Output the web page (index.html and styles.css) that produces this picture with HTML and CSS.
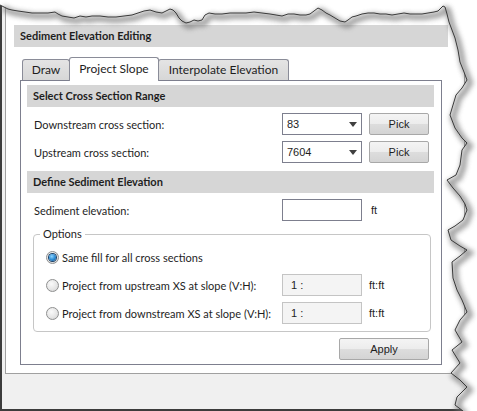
FILE: index.html
```html
<!DOCTYPE html>
<html>
<head>
<meta charset="utf-8">
<link rel="stylesheet" href="styles.css">
</head>
<body>
<div class="shot">
  <div class="window">
    <div class="panel">
      <div class="title">Sediment Elevation Editing</div>
      <div class="tabs">
        <div class="tab tab-draw">Draw</div>
        <div class="tab tab-slope active">Project Slope</div>
        <div class="tab tab-interp">Interpolate Elevation</div>
      </div>
      <div class="tabpage">
        <div class="section">Select Cross Section Range</div>
        <div class="row">
          <span class="label">Downstream cross section:</span>
          <div class="combo"><span class="value">83</span><span class="arrow"></span></div>
          <div class="btn pick">Pick</div>
        </div>
        <div class="row">
          <span class="label">Upstream cross section:</span>
          <div class="combo"><span class="value">7604</span><span class="arrow"></span></div>
          <div class="btn pick">Pick</div>
        </div>
        <div class="section section-second">Define Sediment Elevation</div>
        <div class="row">
          <span class="label">Sediment elevation:</span>
          <div class="field"></div>
          <span class="unit">ft</span>
        </div>
        <fieldset class="options">
          <legend>Options</legend>
          <div class="opt">
            <span class="radio checked"></span><span class="opt-text">Same fill for all cross sections</span>
          </div>
          <div class="opt">
            <span class="radio"></span><span class="opt-text">Project from upstream XS at slope (V:H):</span>
            <div class="field disabled">1 :</div><span class="unit unit-ratio">ft:ft</span>
          </div>
          <div class="opt">
            <span class="radio"></span><span class="opt-text">Project from downstream XS at slope (V:H):</span>
            <div class="field disabled">1 :</div><span class="unit unit-ratio">ft:ft</span>
          </div>
        </fieldset>
        <div class="actions"><div class="btn apply">Apply</div></div>
      </div>
    </div>
  </div>
  <svg class="tear" width="477" height="411" viewBox="0 0 477 411">
    <defs><filter id="blur" x="-10%" y="-10%" width="120%" height="120%"><feGaussianBlur stdDeviation="2.6"/></filter></defs>
    <polyline class="tear-shadow" transform="translate(3,3)" points="0,5 4,7 8,9 12,10 18,11 25,12 32,13 40,13 48,13 55,12 58,14 62,16 68,17 74,18 80,16 86,17 92,16 100,16 108,17 116,17 124,16 132,15 138,13 144,11 150,10 156,12 162,13 166,11 170,9 173,10 176,13 179,18 182,21 186,23 190,22 194,20 198,21 202,20 205,15 209,13 215,14 222,14 230,13 238,13 246,13 254,12 262,13 270,14 276,15 282,16 288,14 294,14 300,15 306,15 310,14 314,11 318,8 322,10 326,13 330,15 335,18 340,21 345,22 348,20 352,17 356,16 362,14 368,13 374,13 380,14 386,14 392,15 398,14 404,13 410,14 416,14 422,14 428,13 434,12 438,11 441,8 443,6 445,7 447,14 449,22 452,30 455,38 458,50 460,62 464,72 467,80 462,88 456,95 453,105 450,115 455,128 462,138 467,143 462,150 460,165 456,175 447,180 453,188 460,196 465,204 467,210 463,220 455,226 448,230 451,240 460,246 467,250 460,256 452,262 453,278 457,290 462,300 467,312 460,320 455,330 462,342 452,350 460,363 451,373 460,380 467,387 457,397 455,405 463,411"/>
    <polyline class="tear-line" points="0,5 4,7 8,9 12,10 18,11 25,12 32,13 40,13 48,13 55,12 58,14 62,16 68,17 74,18 80,16 86,17 92,16 100,16 108,17 116,17 124,16 132,15 138,13 144,11 150,10 156,12 162,13 166,11 170,9 173,10 176,13 179,18 182,21 186,23 190,22 194,20 198,21 202,20 205,15 209,13 215,14 222,14 230,13 238,13 246,13 254,12 262,13 270,14 276,15 282,16 288,14 294,14 300,15 306,15 310,14 314,11 318,8 322,10 326,13 330,15 335,18 340,21 345,22 348,20 352,17 356,16 362,14 368,13 374,13 380,14 386,14 392,15 398,14 404,13 410,14 416,14 422,14 428,13 434,12 438,11 441,8 443,6 445,7 447,14 449,22 452,30 455,38 458,50 460,62 464,72 467,80 462,88 456,95 453,105 450,115 455,128 462,138 467,143 462,150 460,165 456,175 447,180 453,188 460,196 465,204 467,210 463,220 455,226 448,230 451,240 460,246 467,250 460,256 452,262 453,278 457,290 462,300 467,312 460,320 455,330 462,342 452,350 460,363 451,373 460,380 467,387 457,397 455,405 463,411"/>
  </svg>
</div>
</body>
</html>
```
FILE: styles.css
```css
html, body {
  margin: 0;
  padding: 0;
  background: #ffffff;
}
body {
  width: 477px;
  height: 411px;
  overflow: hidden;
  font-family: Lato, "Open Sans", sans-serif;
  font-size: 11px;
  color: #1e1e1e;
}
.shot {
  position: relative;
  width: 477px;
  height: 411px;
}
.window {
  box-sizing: border-box;
  width: 477px;
  height: 411px;
  background: #f0f0f0;
  border-left: 2px solid #3c3c3c;
  border-bottom: 2px solid #3c3c3c;
  padding-left: 3px;
  clip-path: polygon(0px 5px, 4px 7px, 8px 9px, 12px 10px, 18px 11px, 25px 12px, 32px 13px, 40px 13px, 48px 13px, 55px 12px, 58px 14px, 62px 16px, 68px 17px, 74px 18px, 80px 16px, 86px 17px, 92px 16px, 100px 16px, 108px 17px, 116px 17px, 124px 16px, 132px 15px, 138px 13px, 144px 11px, 150px 10px, 156px 12px, 162px 13px, 166px 11px, 170px 9px, 173px 10px, 176px 13px, 179px 18px, 182px 21px, 186px 23px, 190px 22px, 194px 20px, 198px 21px, 202px 20px, 205px 15px, 209px 13px, 215px 14px, 222px 14px, 230px 13px, 238px 13px, 246px 13px, 254px 12px, 262px 13px, 270px 14px, 276px 15px, 282px 16px, 288px 14px, 294px 14px, 300px 15px, 306px 15px, 310px 14px, 314px 11px, 318px 8px, 322px 10px, 326px 13px, 330px 15px, 335px 18px, 340px 21px, 345px 22px, 348px 20px, 352px 17px, 356px 16px, 362px 14px, 368px 13px, 374px 13px, 380px 14px, 386px 14px, 392px 15px, 398px 14px, 404px 13px, 410px 14px, 416px 14px, 422px 14px, 428px 13px, 434px 12px, 438px 11px, 441px 8px, 443px 6px, 445px 7px, 447px 14px, 449px 22px, 452px 30px, 455px 38px, 458px 50px, 460px 62px, 464px 72px, 467px 80px, 462px 88px, 456px 95px, 453px 105px, 450px 115px, 455px 128px, 462px 138px, 467px 143px, 462px 150px, 460px 165px, 456px 175px, 447px 180px, 453px 188px, 460px 196px, 465px 204px, 467px 210px, 463px 220px, 455px 226px, 448px 230px, 451px 240px, 460px 246px, 467px 250px, 460px 256px, 452px 262px, 453px 278px, 457px 290px, 462px 300px, 467px 312px, 460px 320px, 455px 330px, 462px 342px, 452px 350px, 460px 363px, 451px 373px, 460px 380px, 467px 387px, 457px 397px, 455px 405px, 463px 411px, 0px 411px);
}
.panel {
  box-sizing: border-box;
  width: 460px;
  height: 374px;
  background: #ffffff;
  border: 1px solid #a0a0a0;
  border-top: 0;
  padding: 25px 0 0 8px;
}
.title {
  box-sizing: border-box;
  width: 434px;
  height: 22px;
  line-height: 22px;
  padding-left: 6px;
  background: #d6d6d6;
  font-weight: 700;
}
.tabs {
  display: flex;
  align-items: flex-end;
  height: 24px;
  margin: 10px 0 0 8px;
  font-size: 12px;
}
.tab {
  box-sizing: border-box;
  height: 22px;
  line-height: 19px;
  text-align: center;
  background: linear-gradient(#e4e4e4, #d6d6d6);
  border: 1px solid #8a8c98;
  border-bottom: 0;
  border-radius: 3px 3px 0 0;
}
.tab + .tab {
  margin-left: -1px;
}
.tab-draw { width: 48px; }
.tab-slope { width: 90px; }
.tab-interp { width: 131px; }
.tab.active {
  position: relative;
  z-index: 2;
  height: 24px;
  line-height: 22px;
  background: #ffffff;
}
.tabpage {
  position: relative;
  z-index: 1;
  box-sizing: border-box;
  width: 422px;
  height: 285px;
  margin: -1px 0 0 6px;
  background: #ffffff;
  border: 1px solid #7d7f8e;
  padding: 4px 7px 0 6px;
}
.section {
  box-sizing: border-box;
  height: 22px;
  line-height: 22px;
  padding-left: 6px;
  background: #d6d6d6;
  font-weight: 700;
}
.section-second {
  margin-top: 8px;
}
.row {
  display: flex;
  align-items: center;
  height: 22px;
  margin-top: 6px;
  padding-left: 7px;
}
.label {
  width: 248px;
  flex: none;
}
.combo, .field {
  box-sizing: border-box;
  flex: none;
  width: 80px;
  height: 22px;
  border: 1px solid #7d7f8e;
  background: #ffffff;
  font-family: "Liberation Sans", Arial, sans-serif;
  font-size: 11px;
  color: #1e1e1e;
}
.combo {
  display: flex;
  align-items: center;
  justify-content: space-between;
  padding: 0 4px 0 4px;
}
.arrow {
  width: 0;
  height: 0;
  border-left: 4px solid transparent;
  border-right: 4px solid transparent;
  border-top: 5px solid #404040;
}
.btn {
  box-sizing: border-box;
  flex: none;
  height: 22px;
  line-height: 20px;
  text-align: center;
  border: 1px solid #a8a8a8;
  border-radius: 2px;
  background: linear-gradient(#f4f4f4 0%, #ececec 50%, #dddddd 51%, #d4d4d4 100%);
  font-family: "Liberation Sans", Arial, sans-serif;
  font-size: 11px;
  color: #1e1e1e;
}
.pick {
  width: 60px;
  margin-left: 7px;
}
.unit {
  margin-left: 9px;
  font-family: "Liberation Sans", Arial, sans-serif;
  font-size: 11px;
}
.unit-ratio {
  margin-left: 7px;
}
.options {
  margin: 5px 3px 0 6px;
  padding: 4px 0 7px 12px;
  border: 1px solid #c6c6c6;
  border-radius: 4px;
  min-width: 0;
}
.options legend {
  margin-left: -6px;
  padding: 0 3px;
  line-height: 16px;
}
.opt {
  display: flex;
  align-items: center;
  height: 22px;
}
.opt + .opt {
  margin-top: 6px;
}
.radio {
  box-sizing: border-box;
  flex: none;
  width: 13px;
  height: 13px;
  border-radius: 50%;
  border: 1px solid #8e8f8f;
  background: radial-gradient(circle at 40% 35%, #fafafa 0%, #e6e6e6 55%, #cfcfcf 100%);
  display: flex;
  align-items: center;
  justify-content: center;
}
.radio.checked::after {
  content: "";
  width: 7px;
  height: 7px;
  border-radius: 50%;
  background: radial-gradient(circle at 40% 35%, #8fd4ff 0%, #2f8fd6 50%, #0f4f8f 100%);
  box-shadow: 0 0 0 1px #1a3f66;
}
.opt-text {
  width: 220px;
  flex: none;
  margin-left: 3px;
  white-space: nowrap;
}
.field.disabled {
  background: #f4f4f4;
  border-color: #c4c4c4;
  padding-left: 8px;
  line-height: 20px;
}
.actions {
  display: flex;
  justify-content: flex-end;
  margin: 6px 5px 0 0;
}
.apply {
  width: 90px;
}
.tear {
  position: absolute;
  left: 0;
  top: 0;
  pointer-events: none;
}
.tear-shadow {
  fill: none;
  stroke: #707070;
  stroke-width: 6;
  opacity: 0.65;
  filter: url(#blur);
}
.tear-line {
  fill: none;
  stroke: #3a3a3a;
  stroke-width: 1;
}
```
